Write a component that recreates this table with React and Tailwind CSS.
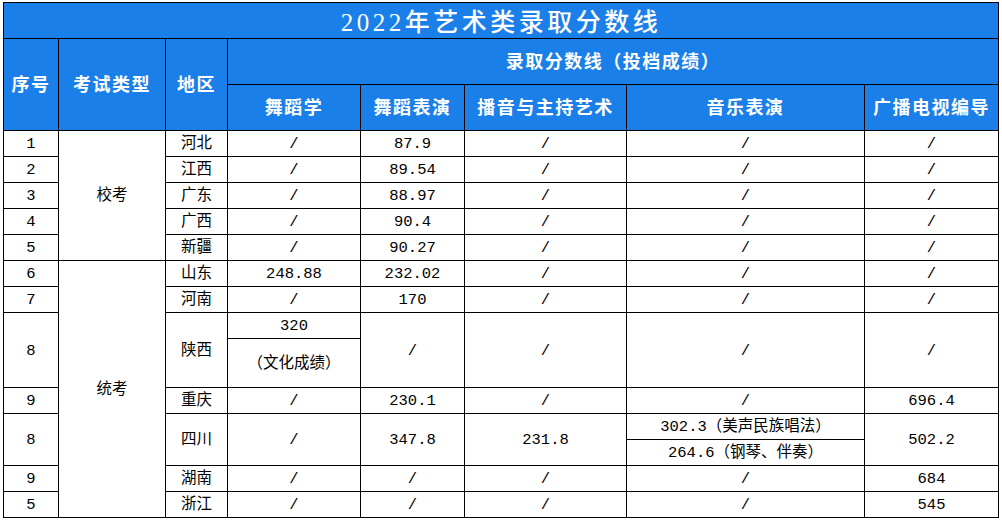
import React from "react";

const B = "border border-black text-center align-middle px-0 pb-0 pt-[3px] leading-none";
const H = "border border-black text-center align-middle p-0 leading-none bg-[#1b7fe9] text-white font-bold text-[18px] tracking-[1.5px]";
const SERIF = { fontFamily: "'Liberation Serif','Noto Sans CJK SC',serif" };

function Cell({ children, rs, cs, cls = "" }) {
  return (
    <td rowSpan={rs} colSpan={cs} className={`${B} ${cls}`}>
      {children}
    </td>
  );
}

const simple = [
  ["1", "河北", "/", "87.9", "/", "/", "/"],
  ["2", "江西", "/", "89.54", "/", "/", "/"],
  ["3", "广东", "/", "88.97", "/", "/", "/"],
  ["4", "广西", "/", "90.4", "/", "/", "/"],
  ["5", "新疆", "/", "90.27", "/", "/", "/"],
];

export default function App() {
  return (
    <div className="w-[1002px] h-[521px] bg-white pl-[3px] pt-[2px] overflow-hidden">
      <table
        className="table-fixed border-collapse w-[995px] text-black text-[15.5px]"
        style={{ fontFamily: "'Liberation Mono','Noto Sans CJK SC',monospace" }}
      >
        <colgroup>
          <col className="w-[55px]" />
          <col className="w-[107px]" />
          <col className="w-[62px]" />
          <col className="w-[133px]" />
          <col className="w-[104px]" />
          <col className="w-[162px]" />
          <col className="w-[238px]" />
          <col className="w-[134px]" />
        </colgroup>
        <tbody>
          <tr className="h-[36px]">
            <td
              colSpan={8}
              className="border border-black text-center align-middle pt-[4px] pb-0 px-0 leading-none bg-[#1b7fe9] text-white text-[25px] font-medium tracking-[3.5px]"
              style={SERIF}
            >
              2022年艺术类录取分数线
            </td>
          </tr>
          <tr className="h-[46px]">
            <td rowSpan={2} className={H} style={SERIF}>序号</td>
            <td rowSpan={2} className={H} style={SERIF}>考试类型</td>
            <td rowSpan={2} className={H} style={SERIF}>地区</td>
            <td colSpan={5} className={H} style={SERIF}>录取分数线（投档成绩）</td>
          </tr>
          <tr className="h-[46px]">
            {["舞蹈学", "舞蹈表演", "播音与主持艺术", "音乐表演", "广播电视编导"].map((t) => (
              <td key={t} className={H} style={SERIF}>{t}</td>
            ))}
          </tr>
          {simple.map((r, i) => (
            <tr key={r[0]} className="h-[26px]">
              <Cell>{r[0]}</Cell>
              {i === 0 && <Cell rs={5}>校考</Cell>}
              {r.slice(1).map((v, j) => (
                <Cell key={j}>{v}</Cell>
              ))}
            </tr>
          ))}
          <tr className="h-[26px]">
            <Cell>6</Cell>
            <Cell rs={10}>统考</Cell>
            <Cell>山东</Cell>
            <Cell>248.88</Cell>
            <Cell>232.02</Cell>
            <Cell>/</Cell>
            <Cell>/</Cell>
            <Cell>/</Cell>
          </tr>
          <tr className="h-[26px]">
            <Cell>7</Cell>
            <Cell>河南</Cell>
            <Cell>/</Cell>
            <Cell>170</Cell>
            <Cell>/</Cell>
            <Cell>/</Cell>
            <Cell>/</Cell>
          </tr>
          <tr className="h-[26px]">
            <Cell rs={2}>8</Cell>
            <Cell rs={2}>陕西</Cell>
            <Cell>320</Cell>
            <Cell rs={2}>/</Cell>
            <Cell rs={2}>/</Cell>
            <Cell rs={2}>/</Cell>
            <Cell rs={2}>/</Cell>
          </tr>
          <tr className="h-[49px]">
            <Cell>（文化成绩）</Cell>
          </tr>
          <tr className="h-[26px]">
            <Cell>9</Cell>
            <Cell>重庆</Cell>
            <Cell>/</Cell>
            <Cell>230.1</Cell>
            <Cell>/</Cell>
            <Cell>/</Cell>
            <Cell>696.4</Cell>
          </tr>
          <tr className="h-[26px]">
            <Cell rs={2}>8</Cell>
            <Cell rs={2}>四川</Cell>
            <Cell rs={2}>/</Cell>
            <Cell rs={2}>347.8</Cell>
            <Cell rs={2}>231.8</Cell>
            <Cell>302.3（美声民族唱法）</Cell>
            <Cell rs={2}>502.2</Cell>
          </tr>
          <tr className="h-[26px]">
            <Cell>264.6（钢琴、伴奏）</Cell>
          </tr>
          <tr className="h-[26px]">
            <Cell>9</Cell>
            <Cell>湖南</Cell>
            <Cell>/</Cell>
            <Cell>/</Cell>
            <Cell>/</Cell>
            <Cell>/</Cell>
            <Cell>684</Cell>
          </tr>
          <tr className="h-[26px]">
            <Cell>5</Cell>
            <Cell>浙江</Cell>
            <Cell>/</Cell>
            <Cell>/</Cell>
            <Cell>/</Cell>
            <Cell>/</Cell>
            <Cell>545</Cell>
          </tr>
        </tbody>
      </table>
    </div>
  );
}
